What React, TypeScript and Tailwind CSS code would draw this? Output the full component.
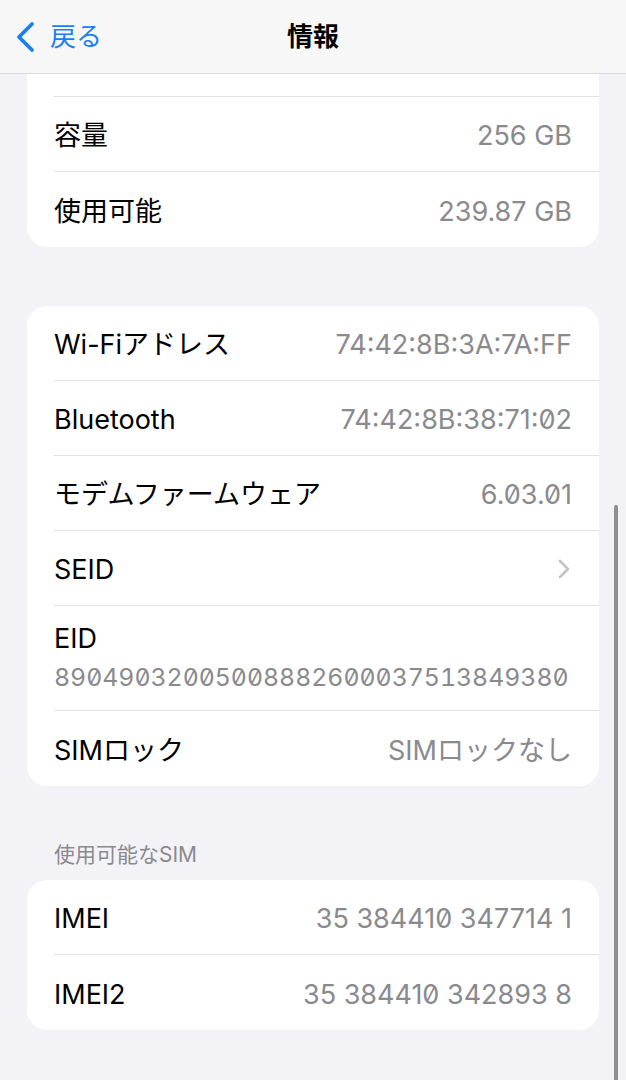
import React from "react";

const FONT = "font-['Inter','Noto_Sans_CJK_JP',sans-serif]";

function Row({
  label,
  value,
  last,
  chevron,
}: {
  label?: string;
  value?: string;
  last?: boolean;
  chevron?: boolean;
}) {
  return (
    <div
      className={`ml-[27px] pr-[27px] pt-[5px] h-[75px] flex items-center justify-between ${
        last ? "" : "border-b border-[#e2e2e5]"
      }`}
    >
      <span className="text-[27px] text-black">{label}</span>
      {chevron ? (
        <svg width="14" height="22" viewBox="0 0 14 22" className="mr-[1px] -mt-[4px]">
          <polyline
            points="3,3 11,11 3,19"
            fill="none"
            stroke="#c4c4c7"
            strokeWidth="2.6"
            strokeLinecap="round"
            strokeLinejoin="round"
          />
        </svg>
      ) : (
        <span className="text-[27px] text-[#8a8a8e] slashed-zero">{value}</span>
      )}
    </div>
  );
}

export default function App() {
  return (
    <div
      className={`relative w-[626px] h-[1080px] overflow-hidden bg-[#f2f2f7] ${FONT}`}
    >
      {/* content */}
      <div className="pt-[22px] px-[27px]">
        <div className="bg-white rounded-[20px]">
          <Row label="" value="" />
          <Row label="容量" value="256 GB" />
          <Row label="使用可能" value="239.87 GB" last />
        </div>

        <div className="h-[59px]" />

        <div className="bg-white rounded-[20px]">
          <Row label="Wi-Fiアドレス" value="74:42:8B:3A:7A:FF" />
          <Row label="Bluetooth" value="74:42:8B:38:71:02" />
          <Row label="モデムファームウェア" value="6.03.01" />
          <Row label="SEID" chevron />
          <div className="ml-[27px] pr-[27px] h-[105px] flex flex-col justify-center gap-[6px] border-b border-[#e2e2e5]">
            <span className="text-[27px] leading-[32px] text-black">EID</span>
            <span className="text-[24.8px] leading-[32px] text-[#8a8a8e] slashed-zero tabular-nums">
              89049032005008882600037513849380
            </span>
          </div>
          <Row label="SIMロック" value="SIMロックなし" last />
        </div>

        <div className="h-[94px] flex items-end pb-[13px] pl-[27px]">
          <span className="text-[21px] leading-[24px] text-[#8a8a8e]">使用可能なSIM</span>
        </div>

        <div className="bg-white rounded-[20px]">
          <Row label="IMEI" value="35 384410 347714 1" />
          <Row label="IMEI2" value="35 384410 342893 8" last />
        </div>
      </div>

      {/* navigation bar */}
      <div className="absolute top-0 left-0 right-0 h-[74px] bg-[#f7f7f7] border-b border-[#d9d9dc] flex items-center">
        <div className="flex items-center pl-[14px]">
          <svg width="22" height="32" viewBox="0 0 22 32">
            <polyline
              points="18,3 5,16 18,29"
              fill="none"
              stroke="#1a7ff0"
              strokeWidth="3.8"
              strokeLinecap="round"
              strokeLinejoin="round"
            />
          </svg>
          <span className="ml-[14px] text-[26px] text-[#1a7ff0] leading-none">戻る</span>
        </div>
        <div className="absolute left-0 right-0 top-0 h-[73px] flex items-center justify-center pointer-events-none">
          <span className="text-[26px] font-bold text-black leading-none">情報</span>
        </div>
      </div>

      {/* scroll indicator */}
      <div className="absolute left-[614px] top-[505px] w-[4px] h-[600px] rounded-full bg-[#8e8e93]" />
    </div>
  );
}
